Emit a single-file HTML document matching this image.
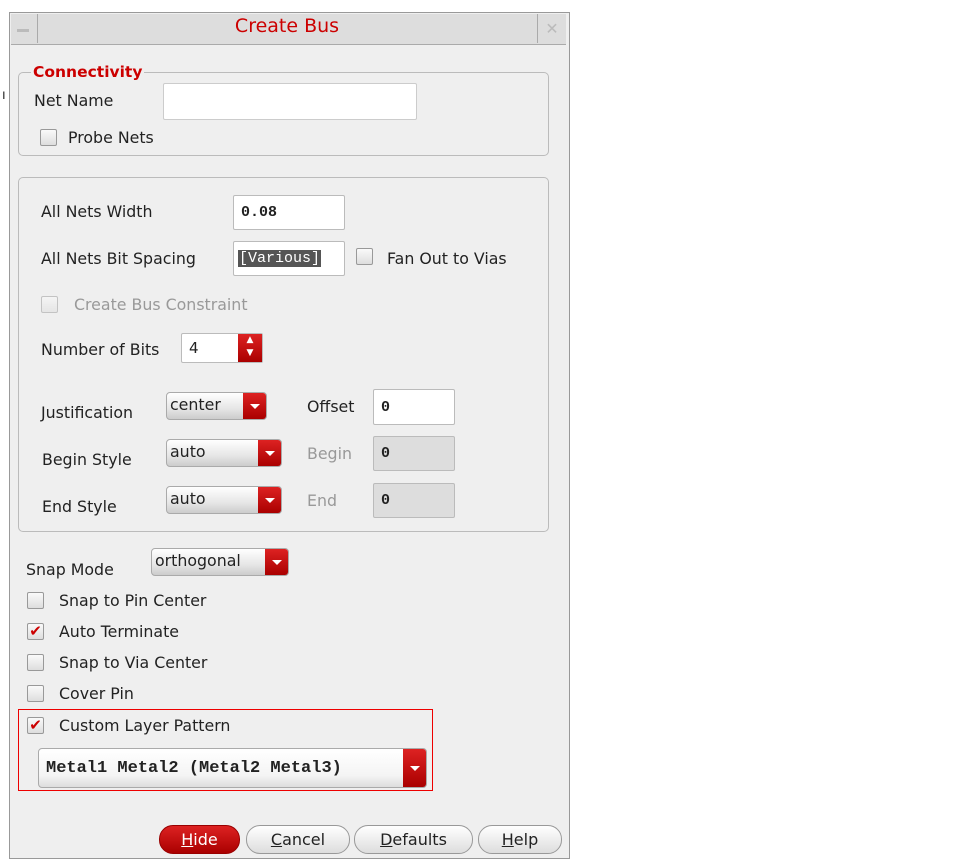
<!DOCTYPE html><html><head><style>
body{margin:0;width:960px;height:865px;background:#fff;font-family:"DejaVu Sans","Liberation Sans",sans-serif;font-size:15.8px;color:#222;position:relative;overflow:hidden}
.a{position:absolute}
.win{left:9px;top:12px;width:559px;height:845px;background:#efefef;border:1px solid #999}
.grp{border:1px solid #bbb;border-radius:5px;box-sizing:border-box}
.in{background:#fff;border:1px solid #bbb;border-radius:2px;box-sizing:border-box;font-family:"Liberation Mono","DejaVu Sans Mono",monospace;font-size:15px;font-weight:bold;padding-left:7px;display:flex;align-items:center}
.dis{background:#ddd}
.cb{width:17px;height:17px;border:1px solid #999;background:linear-gradient(#fafafa,#ddd);box-sizing:border-box;border-radius:2px}
.cm{color:#c00;font-size:15px;line-height:15px;text-align:center;font-weight:bold}
.dd{border:1px solid #aaa;border-radius:4px;background:linear-gradient(#fff,#e6e6e6 60%,#ccc);box-sizing:border-box;padding-left:3px;line-height:24px;overflow:hidden}
.dd i{position:absolute;right:0;top:0;bottom:0;width:23px;background:linear-gradient(#d22,#a00)}
.dd i:after{content:"";position:absolute;left:7px;top:50%;margin-top:-2px;border:5px solid transparent;border-top:5px solid #fff;border-bottom:0}
.btn{border:1px solid #999;border-radius:14px;background:linear-gradient(#fff,#ddd);box-sizing:border-box;text-align:center;line-height:27px;font-size:16px}
.gray{color:#999}
</style></head><body>
<div class="a win"></div>
<div class="a" style="left:11px;top:14px;width:555px;height:30px;background:#ddd;border-bottom:1px solid #aaa"></div>
<div class="a" style="left:11px;top:14px;width:26px;height:29px;border-right:1px solid #aaa"></div>
<div class="a" style="left:17px;top:29px;width:12px;height:3px;background:#bbb"></div>
<div class="a" style="left:537px;top:14px;width:28px;height:29px;border-left:1px solid #aaa;color:#bbb;text-align:center;line-height:29px">✕</div>
<div class="a" style="left:0;top:15px;width:574px;text-align:center;color:#c00;font-size:19px">Create Bus</div>
<div class="a" style="left:2px;top:88px;font-size:13px">ı</div>

<div class="a grp" style="left:18px;top:72px;width:531px;height:84px"></div>
<div class="a" style="left:31px;top:63px;background:#efefef;padding:0 2px;color:#c00;font-weight:bold;font-size:15.5px">Connectivity</div>
<div class="a" style="left:34px;top:91px">Net Name</div>
<div class="a in" style="left:163px;top:83px;width:254px;height:37px;border-color:#ccc"></div>
<div class="a cb" style="left:40px;top:129px"></div><div class="a" style="left:68px;top:128px">Probe Nets</div>

<div class="a grp" style="left:18px;top:177px;width:531px;height:355px"></div>
<div class="a" style="left:41px;top:202px">All Nets Width</div>
<div class="a in" style="left:233px;top:195px;width:112px;height:35px">0.08</div>
<div class="a" style="left:41px;top:249px">All Nets Bit Spacing</div>
<div class="a in" style="left:233px;top:241px;width:112px;height:35px;padding-left:4px"><span style="background:#555;color:#fff;padding:0 1px;font-weight:normal">[Various]</span></div>
<div class="a cb" style="left:356px;top:248px"></div><div class="a" style="left:387px;top:249px">Fan Out to Vias</div>
<div class="a cb" style="left:41px;top:296px;opacity:.5"></div><div class="a gray" style="left:74px;top:295px">Create Bus Constraint</div>
<div class="a" style="left:41px;top:340px">Number of Bits</div>
<div class="a in" style="left:181px;top:333px;width:82px;height:30px;font-family:'DejaVu Sans',sans-serif;font-weight:normal">4</div>
<div class="a" style="left:238px;top:334px;width:24px;height:28px;background:linear-gradient(#d22,#a00);color:#fff;font-size:9px;text-align:center;line-height:13px">▲<br>▼</div>
<div class="a" style="left:41px;top:403px">Justification</div>
<div class="a dd" style="left:166px;top:392px;width:101px;height:28px">center<i></i></div>
<div class="a" style="left:307px;top:397px">Offset</div>
<div class="a in" style="left:373px;top:389px;width:82px;height:36px">0</div>
<div class="a" style="left:42px;top:450px">Begin Style</div>
<div class="a dd" style="left:166px;top:439px;width:116px;height:28px">auto<i></i></div>
<div class="a gray" style="left:307px;top:444px">Begin</div>
<div class="a in dis" style="left:373px;top:436px;width:82px;height:35px">0</div>
<div class="a" style="left:42px;top:497px">End Style</div>
<div class="a dd" style="left:166px;top:486px;width:116px;height:28px">auto<i></i></div>
<div class="a gray" style="left:307px;top:491px">End</div>
<div class="a in dis" style="left:373px;top:483px;width:82px;height:35px">0</div>

<div class="a" style="left:26px;top:560px">Snap Mode</div>
<div class="a dd" style="left:151px;top:548px;width:138px;height:28px">orthogonal<i></i></div>
<div class="a cb" style="left:27px;top:592px"></div><div class="a" style="left:59px;top:591px">Snap to Pin Center</div>
<div class="a cb cm" style="left:27px;top:623px">✔</div><div class="a" style="left:59px;top:622px">Auto Terminate</div>
<div class="a cb" style="left:27px;top:654px"></div><div class="a" style="left:59px;top:653px">Snap to Via Center</div>
<div class="a cb" style="left:27px;top:685px"></div><div class="a" style="left:59px;top:684px">Cover Pin</div>
<div class="a" style="left:18px;top:709px;width:415px;height:82px;border:1px solid #e00;box-sizing:border-box"></div>
<div class="a cb cm" style="left:27px;top:717px">✔</div><div class="a" style="left:59px;top:716px">Custom Layer Pattern</div>
<div class="a dd" style="left:38px;top:748px;width:389px;height:40px;font-family:'Liberation Mono',monospace;font-weight:bold;font-size:17px;line-height:40px;padding-left:7px;background:linear-gradient(#fff,#f4f4f4 70%,#ddd)">Metal1 Metal2 (Metal2 Metal3)<i></i></div>

<div class="a btn" style="left:159px;top:825px;width:81px;height:29px;background:linear-gradient(#d22,#a00);color:#fff;border-color:#900"><u>H</u>ide</div>
<div class="a btn" style="left:246px;top:825px;width:104px;height:29px"><u>C</u>ancel</div>
<div class="a btn" style="left:354px;top:825px;width:119px;height:29px"><u>D</u>efaults</div>
<div class="a btn" style="left:478px;top:825px;width:84px;height:29px"><u>H</u>elp</div>
</body></html>
